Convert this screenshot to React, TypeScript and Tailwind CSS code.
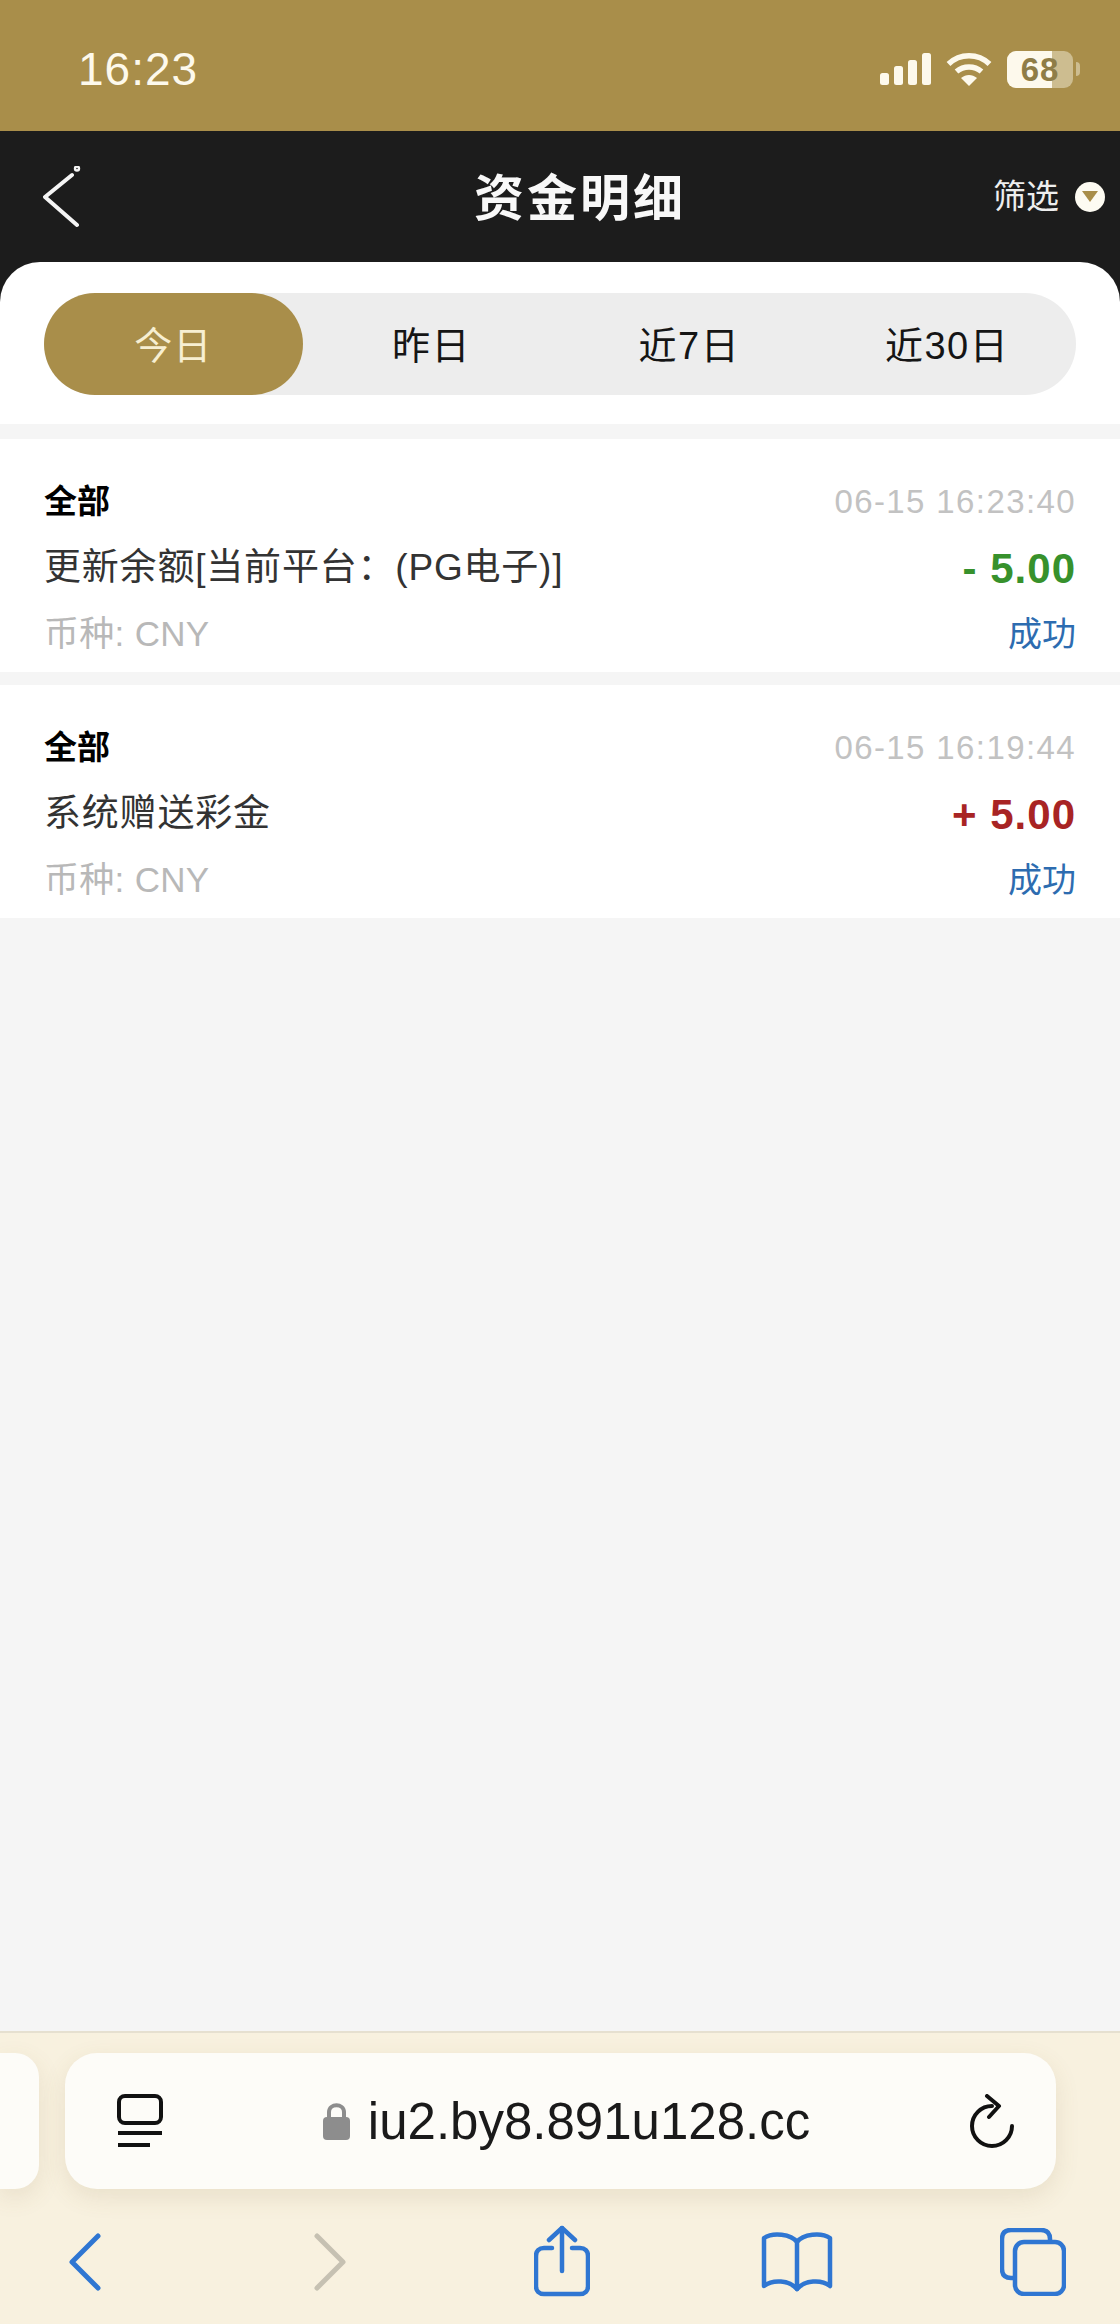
const fontStack = "font-['Liberation_Sans','Noto_Sans_CJK_SC',sans-serif]";

const tabs = ["今日", "昨日", "近7日", "近30日"];

const records = [
  {
    time: "06-15 16:23:40",
    title: "更新余额[当前平台：(PG电子)]",
    amount: "- 5.00",
    amountClass: "text-[#37912c]",
  },
  {
    time: "06-15 16:19:44",
    title: "系统赠送彩金",
    amount: "+ 5.00",
    amountClass: "text-[#a82424]",
  },
];

function StatusIcons() {
  return (
    <div className="flex items-center gap-[15px]">
      <svg width="51" height="32" viewBox="0 0 51 32" fill="#fdf9ec">
        <rect x="0" y="20" width="9" height="12" rx="2.5" />
        <rect x="14" y="13" width="9" height="19" rx="2.5" />
        <rect x="28" y="7" width="9" height="25" rx="2.5" />
        <rect x="42" y="0" width="9" height="32" rx="2.5" />
      </svg>
      <svg width="46" height="34" viewBox="0 0 46 34" fill="none" stroke="#fdf9ec" strokeWidth="5.5">
        <path d="M2.5 12C14 1 32 1 43.5 12" />
        <path d="M10.5 19.5C17.5 13.5 28.5 13.5 35.5 19.5" />
        <path d="M23 34L15 26C20 22 26 22 31 26Z" fill="#fdf9ec" stroke="none" />
      </svg>
      <div className="flex items-center gap-[3px]">
        <div className="relative flex h-[37px] w-[66px] items-center justify-center overflow-hidden rounded-[9px] bg-[#cdbd90]">
          <div className="absolute inset-y-0 left-0 w-[45px] bg-[#fdf9ec]" />
          <span className="relative text-[33px] leading-none font-bold tracking-[1px] text-[#8f7d47]">68</span>
        </div>
        <div className="h-[14px] w-[4px] rounded-r-full bg-[#cdbd90]" />
      </div>
    </div>
  );
}

function BackIcon() {
  return (
    <svg width="38" height="62" viewBox="0 0 38 62" fill="none" stroke="#f5f5f5" strokeWidth="4" strokeLinecap="round" strokeLinejoin="round">
      <path d="M29 9L2 31L34 59" />
      <circle cx="34" cy="2.5" r="1.2" />
    </svg>
  );
}

function RecordCard({ record }: { record: (typeof records)[number] }) {
  return (
    <div className="flex flex-col bg-white px-[44px] pt-[30px] pb-[5px]">
      <div className="flex h-[66px] items-center justify-between">
        <span className="text-[33px] font-bold text-black">全部</span>
        <span className="text-[33px] tracking-[1.4px] text-[#c2c2c2]">{record.time}</span>
      </div>
      <div className="flex h-[66px] items-center justify-between">
        <span className="text-[37px] tracking-[0.8px] text-[#333333]">{record.title}</span>
        <span className={`text-[42px] font-bold tracking-[1px] ${record.amountClass}`}>{record.amount}</span>
      </div>
      <div className="flex h-[66px] items-center justify-between">
        <span className="text-[35px] tracking-[0.3px] text-[#b8b8b8]">币种: CNY</span>
        <span className="text-[34px] text-[#2d6cb0]">成功</span>
      </div>
    </div>
  );
}

export default function App() {
  return (
    <div className={`flex h-[2324px] w-[1120px] flex-col overflow-hidden bg-[#f5f5f5] ${fontStack}`}>
      <div className="flex h-[131px] items-center justify-between bg-[#a98e4a] pt-[7px] pr-[40px] pl-[78px]">
        <span className="text-[46px] font-medium tracking-[1px] text-[#fdf9ec]">16:23</span>
        <StatusIcons />
      </div>

      <div className="bg-[#1c1c1c]">
        <div className="flex h-[131px] items-center justify-between pr-[15px] pl-[43px]">
          <div className="w-[210px]">
            <BackIcon />
          </div>
          <span className="pt-[6px] pl-[12px] text-[50px] font-bold tracking-[3px] text-[#f8f8f8]">资金明细</span>
          <div className="flex w-[210px] items-center justify-end gap-[16px]">
            <span className="text-[33px] text-[#eeeeee]">筛选</span>
            <div className="flex h-[30px] w-[30px] items-center justify-center rounded-full bg-[#fdfbf2]">
              <div className="h-0 w-0 border-x-[8px] border-t-[11px] border-x-transparent border-t-[#a98e4a]" />
            </div>
          </div>
        </div>
        <div className="flex h-[162px] items-start rounded-t-[40px] bg-white px-[44px] pt-[31px]">
          <div className="flex h-[102px] w-full items-center rounded-full bg-[#ededed]">
            {tabs.map((tab, i) => (
              <div
                key={tab}
                className={
                  i === 0
                    ? "flex h-full w-[259px] items-center justify-center rounded-full bg-[#a98e4a] pt-[5px] text-[38px] tracking-[1px] text-[#f7efd2]"
                    : "flex h-full w-[258px] items-center justify-center pt-[5px] text-[38px] tracking-[1.5px] text-[#151515]"
                }
              >
                {tab}
              </div>
            ))}
          </div>
        </div>
      </div>

      <div className="mt-[15px] flex flex-col gap-[13px]">
        {records.map((record) => (
          <RecordCard key={record.time} record={record} />
        ))}
      </div>

      <div className="mt-auto flex h-[293px] flex-col border-t-2 border-[#e6e0d0] bg-[#f8f1df]">
        <div className="mt-[20px] flex h-[136px] gap-[26px]">
          <div className="w-[39px] rounded-r-[24px] bg-[#fdfcf8] shadow-[0_8px_24px_rgba(120,100,50,0.12)]" />
          <div className="flex w-[991px] items-center rounded-[32px] bg-[#fdfcf8] pr-[42px] pl-[52px] shadow-[0_8px_24px_rgba(120,100,50,0.12)]">
            <svg width="46" height="54" viewBox="0 0 46 54" fill="none" stroke="#111111" strokeWidth="4">
              <rect x="2" y="2" width="42" height="27" rx="6" />
              <path d="M1 39H45" />
              <path d="M1 51H33" />
            </svg>
            <div className="flex flex-1 items-center justify-center gap-[18px]">
              <svg width="27" height="38" viewBox="0 0 27 38" fill="none">
                <path d="M6 17V10C6 1 21 1 21 10V17" stroke="#8d8d8d" strokeWidth="4" />
                <rect x="0" y="15" width="27" height="23" rx="4" fill="#8d8d8d" />
              </svg>
              <span className="text-[51px] leading-none text-[#1a1a1a]">iu2.by8.891u128.cc</span>
            </div>
            <svg width="44" height="54" viewBox="0 0 44 54" fill="none" stroke="#111111" strokeWidth="4" strokeLinecap="round" strokeLinejoin="round">
              <path d="M22 12A20 20 0 1 0 42 32" />
              <path d="M17 2L29 12L19 23" />
            </svg>
          </div>
        </div>

        <div className="mt-[36px] flex items-start pl-[69px]">
          <svg className="mt-[8px]" width="32" height="58" viewBox="0 0 32 58" fill="none" stroke="#2f76d2" strokeWidth="5" strokeLinecap="round" strokeLinejoin="round">
            <path d="M29 3L3 29L29 55" />
          </svg>
          <svg className="mt-[8px] ml-[213px]" width="32" height="58" viewBox="0 0 32 58" fill="none" stroke="#c6c1b2" strokeWidth="5" strokeLinecap="round" strokeLinejoin="round">
            <path d="M3 3L29 29L3 55" />
          </svg>
          <svg className="ml-[188px]" width="56" height="72" viewBox="0 0 56 72" fill="none" stroke="#2f76d2" strokeWidth="4.5" strokeLinecap="round" strokeLinejoin="round">
            <path d="M18 23H10C5 23 2 26 2 31V61C2 66 5 69 10 69H46C51 69 54 66 54 61V31C54 26 51 23 46 23H38" />
            <path d="M28 46V3" />
            <path d="M15 15L28 3L41 15" />
          </svg>
          <svg className="mt-[7px] ml-[171px]" width="72" height="60" viewBox="0 0 72 60" fill="none" stroke="#2f76d2" strokeWidth="4.5" strokeLinecap="round" strokeLinejoin="round">
            <path d="M36 10C30 2 12 0 3 6V54C12 47 28 48 36 57C44 48 60 47 69 54V6C60 0 42 2 36 10Z" />
            <path d="M36 10V57" />
          </svg>
          <svg className="mt-[3px] ml-[167px]" width="66" height="68" viewBox="0 0 66 68" fill="none" stroke="#2f76d2" strokeWidth="4.5" strokeLinejoin="round">
            <path d="M50 14V11C50 5 47 2 41 2H11C5 2 2 5 2 11V41C2 47 5 50 11 50H15" />
            <rect x="15" y="14" width="49" height="52" rx="9" />
          </svg>
        </div>
      </div>
    </div>
  );
}
